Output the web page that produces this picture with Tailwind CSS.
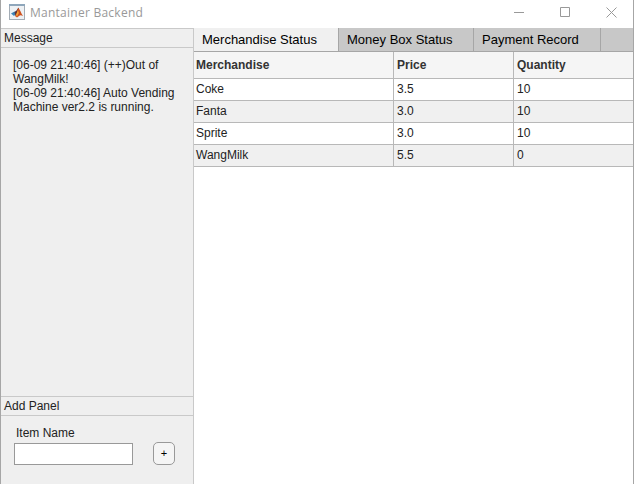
<!DOCTYPE html>
<html lang="en">
<head>
<meta charset="utf-8">
<title>Mantainer Backend</title>
<script src="https://cdn.jsdelivr.net/npm/@tailwindcss/browser@4"></script>
</head>
<body class="bg-white">
<div class="flex h-[484px] w-[634px] flex-col overflow-hidden border-x border-[#a6a6a6] bg-white font-['Liberation_Sans',Arial,sans-serif] text-[12px] leading-[14px] text-[#222]">
  <header class="flex h-7 shrink-0 items-start">
    <svg class="ml-2 mt-1 h-4 w-4" viewBox="0 0 16 16">
      <rect x=".5" y=".5" width="15" height="15" fill="#eef1f4" stroke="#a3acb5"/>
      <rect x="0" y="0" width="16" height="2" fill="#8ea6bb"/>
      <path d="M2 9.5l3.5-2 2 2-2.5 2.5z" fill="#3d83b5"/>
      <path d="M5.500 8l2-1.500 2-3 .5 1.500-1.500 5-2 2z" fill="#5b3038"/>
      <path d="M9 4c2 1 3 5 5 8-2-1-3-1-4 0l-2 1.500-2-1.500c2-2 2-5 3-8z" fill="#cf5220"/>
      <path d="M9 6l.8 3-1.800 3.500-1-1.500z" fill="#f5a536"/>
    </svg>
    <h1 class="ml-[5px] mt-1 w-[120px] whitespace-nowrap font-['Open_Sans','Noto_Sans',sans-serif] text-[12px] leading-[17px] tracking-[0.25px] text-[#999]">Mantainer Backend</h1>
    <div class="ml-auto mr-4 mt-[7px] flex gap-[35px]">
      <svg class="h-[11px] w-[11px]" viewBox="0 0 11 11" fill="none" stroke="#999"><path d="M0 5.500h10"/></svg>
      <svg class="h-[11px] w-[11px]" viewBox="0 0 11 11" fill="none" stroke="#999"><path d="M.5.5h9v9h-9z"/></svg>
      <svg class="h-[11px] w-[11px]" viewBox="0 0 11 11" fill="none" stroke="#999"><path d="M.5.5l10 10M10.500.5l-10 10"/></svg>
    </div>
  </header>
  <div class="flex min-h-0 flex-1">
    <aside class="flex w-[193px] shrink-0 flex-col border-r border-t border-[#c9c9c9] bg-[#efefef]">
      <h2 class="h-[19px] border-b border-[#c9c9c9] pl-[3px] pt-[2px]">Message</h2>
      <div class="flex-1 whitespace-nowrap pl-3 pt-[10px]">[06-09 21:40:46] (++)Out of<br>WangMilk!<br>[06-09 21:40:46] Auto Vending<br>Machine ver2.2 is running.</div>
      <h2 class="h-5 border-y border-[#c9c9c9] pl-[3px] pt-[2px]">Add Panel</h2>
      <div class="flex h-[68px] justify-between pl-[13px] pr-[18px]">
        <label class="flex flex-col pt-[10px]"><span class="pl-[2px]">Item Name</span>
          <input class="mt-[3px] h-[22px] w-[119px] border border-[#999] bg-white outline-none">
        </label>
        <button class="mt-[26px] flex h-[23px] w-[22px] items-center justify-center rounded-[5px] border border-[#999] bg-[#f5f5f5] pb-[2px] text-[11px] text-black">+</button>
      </div>
    </aside>
    <main class="flex flex-1 flex-col">
      <nav class="flex h-6 border-b border-[#a6a6a6] bg-[#c8c8c8] text-[13px] leading-6 text-black">
        <div class="w-[145px] border-r border-[#a6a6a6] bg-[#f0f0f0] pl-2">Merchandise Status</div>
        <div class="w-[135px] border-r border-[#a6a6a6] pl-2">Money Box Status</div>
        <div class="w-[127px] border-r border-[#a6a6a6] pl-2">Payment Record</div>
      </nav>
      <table class="w-full table-fixed border-separate border-spacing-0 text-left">
        <colgroup><col class="w-[200px]"><col class="w-[120px]"><col></colgroup>
        <thead>
          <tr class="h-[27px] bg-[#f5f5f5] text-[#333]">
            <th class="border-b border-r border-[#b8b8b8] pl-[2px]">Merchandise</th><th class="border-b border-r border-[#b8b8b8] pl-[3px]">Price</th><th class="border-b border-[#b8b8b8] pl-[3px]">Quantity</th>
          </tr>
        </thead>
        <tbody>
          <tr class="h-[22px]"><td class="border-b border-r border-[#b8b8b8] pb-px pl-[2px]">Coke</td><td class="border-b border-r border-[#b8b8b8] pb-px pl-[3px]">3.5</td><td class="border-b border-[#b8b8b8] pb-px pl-[3px]">10</td></tr>
          <tr class="h-[22px] bg-[#f0f0f0]"><td class="border-b border-r border-[#b8b8b8] pb-px pl-[2px]">Fanta</td><td class="border-b border-r border-[#b8b8b8] pb-px pl-[3px]">3.0</td><td class="border-b border-[#b8b8b8] pb-px pl-[3px]">10</td></tr>
          <tr class="h-[22px]"><td class="border-b border-r border-[#b8b8b8] pb-px pl-[2px]">Sprite</td><td class="border-b border-r border-[#b8b8b8] pb-px pl-[3px]">3.0</td><td class="border-b border-[#b8b8b8] pb-px pl-[3px]">10</td></tr>
          <tr class="h-[22px] bg-[#f0f0f0]"><td class="border-b border-r border-[#b8b8b8] pb-px pl-[2px]">WangMilk</td><td class="border-b border-r border-[#b8b8b8] pb-px pl-[3px]">5.5</td><td class="border-b border-[#b8b8b8] pb-px pl-[3px]">0</td></tr>
        </tbody>
      </table>
    </main>
  </div>
</div>
</body>
</html>
